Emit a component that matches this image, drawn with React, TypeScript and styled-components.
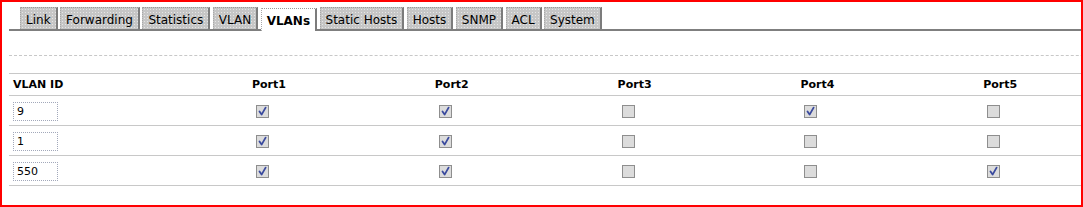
import React from "react";
import styled, { createGlobalStyle } from "styled-components";

const GlobalStyle = createGlobalStyle`
  html, body {
    margin: 0;
    padding: 0;
    background: #ffffff;
  }
  body {
    font-family: "DejaVu Sans", Verdana, sans-serif;
    color: #000000;
  }
`;

const Frame = styled.div`
  width: 1083px;
  height: 207px;
  box-sizing: border-box;
  border: 2px solid #ff0000;
  overflow: hidden;
  padding: 5px 0 0 7px;
`;

const Inner = styled.div`
  width: 1200px;
`;

const TabBar = styled.div`
  display: flex;
  align-items: flex-end;
  padding-left: 11px;
  border-bottom: 2px solid #7f7f7f;
  height: 22px;
`;

const Tab = styled.div<{ $active?: boolean }>`
  box-sizing: border-box;
  height: ${(p) => (p.$active ? "23px" : "22px")};
  margin-right: 2.5px;
  margin-bottom: ${(p) => (p.$active ? "-2px" : "0")};
  padding: 2px 5px 0 5px;
  display: flex;
  align-items: center;
  font-size: 12px;
  font-weight: ${(p) => (p.$active ? 700 : 400)};
  white-space: nowrap;
  border-top: 1px dotted #9a9a9a;
  border-left: 1px dotted #a8a8a8;
  border-right: 2px solid #7c7c7c;
  background-color: ${(p) => (p.$active ? "#ffffff" : "#c6c6c6")};
  background-image: ${(p) =>
    p.$active
      ? "none"
      : "radial-gradient(circle, #e6e6e6 0.6px, transparent 0.8px)"};
  background-size: 3px 3px;
  position: relative;
  z-index: ${(p) => (p.$active ? 1 : 0)};
`;

const Divider = styled.div`
  margin-top: 24px;
  border-top: 1px dashed #c8c8c8;
`;

const Table = styled.div`
  margin-top: 17px;
  border-top: 1px solid #c8c8c8;
`;

const Row = styled.div<{ $head?: boolean }>`
  display: grid;
  grid-template-columns: 239px repeat(5, 182.8px);
  height: ${(p) => (p.$head ? "21px" : "29px")};
  border-bottom: 1px solid #c8c8c8;
`;

const Cell = styled.div<{ $head?: boolean }>`
  display: flex;
  align-items: center;
  padding-left: 4px;
  font-size: 11px;
  font-weight: ${(p) => (p.$head ? 700 : 400)};
`;

const IdInput = styled.input`
  box-sizing: border-box;
  width: 45px;
  height: 19px;
  margin: 1px 0 0 0;
  padding: 0 3px;
  border: 1px dotted #a2a8ba;
  font-family: "DejaVu Sans", Verdana, sans-serif;
  font-size: 11px;
  color: #000000;
  background: #ffffff;
  outline: none;
`;

const Check = styled.span`
  box-sizing: border-box;
  width: 13px;
  height: 13px;
  margin: 1px 0 0 4px;
  border: 1px solid #8e8e8e;
  background-color: #dcdcdc;
  background-image: radial-gradient(circle, #f0f0f0 0.5px, transparent 0.7px);
  background-size: 2px 2px;
  display: flex;
  align-items: center;
  justify-content: center;
`;

const tabs = [
  "Link",
  "Forwarding",
  "Statistics",
  "VLAN",
  "VLANs",
  "Static Hosts",
  "Hosts",
  "SNMP",
  "ACL",
  "System",
];

const vlans = [
  { id: "9", ports: [true, true, false, true, false] },
  { id: "1", ports: [true, true, false, false, false] },
  { id: "550", ports: [true, true, false, false, true] },
];

function Box({ checked }: { checked: boolean }) {
  return (
    <Check>
      {checked && (
        <svg width="11" height="11" viewBox="0 0 11 11">
          <path
            d="M2.5 5.5 L4.6 8.6 L8.6 1.6"
            fill="none"
            stroke="#3a4a9e"
            strokeWidth="1.8"
            strokeLinecap="round"
            strokeLinejoin="round"
          />
        </svg>
      )}
    </Check>
  );
}

export default function App() {
  return (
    <>
      <GlobalStyle />
      <Frame>
        <Inner>
          <TabBar>
            {tabs.map((t) => (
              <Tab key={t} $active={t === "VLANs"}>
                {t}
              </Tab>
            ))}
          </TabBar>
          <Divider />
          <Table>
            <Row $head>
              <Cell $head>VLAN ID</Cell>
              {[1, 2, 3, 4, 5].map((n) => (
                <Cell $head key={n}>
                  Port{n}
                </Cell>
              ))}
            </Row>
            {vlans.map((v) => (
              <Row key={v.id}>
                <Cell>
                  <IdInput defaultValue={v.id} />
                </Cell>
                {v.ports.map((on, i) => (
                  <Cell key={i}>
                    <Box checked={on} />
                  </Cell>
                ))}
              </Row>
            ))}
          </Table>
        </Inner>
      </Frame>
    </>
  );
}
